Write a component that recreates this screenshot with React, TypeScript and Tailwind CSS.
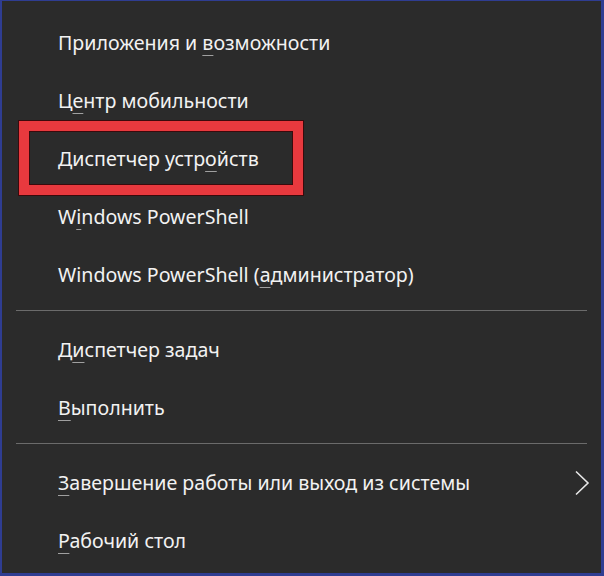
import React from 'react';

type Item = { before: string; key: string; after: string; submenu?: boolean; marked?: boolean };

const groups: Item[][] = [
  [
    { before: 'Приложения и ', key: 'в', after: 'озможности' },
    { before: 'Ц', key: 'е', after: 'нтр мобильности' },
    { before: 'Диспетчер устр', key: 'о', after: 'йств', marked: true },
    { before: 'W', key: 'i', after: 'ndows PowerShell' },
    { before: 'Windows PowerShell (', key: 'а', after: 'дминистратор)' },
  ],
  [
    { before: 'Д', key: 'и', after: 'спетчер задач' },
    { before: '', key: 'В', after: 'ыполнить' },
  ],
  [
    { before: '', key: 'З', after: 'авершение работы или выход из системы', submenu: true },
    { before: '', key: 'Р', after: 'абочий стол' },
  ],
];

function Row({ item }: { item: Item }) {
  return (
    <div className="relative flex h-[58px] items-center pl-[56px] pr-[11px]">
      {/* red annotation frame */}
      {item.marked && (
        <div className="pointer-events-none absolute left-[17px] top-[-9px] h-[74px] w-[284px] border-[10px] border-[#e8393e] shadow-[0_0_0_1px_#3a0a0c,inset_0_0_0_1px_#3a0a0c]" />
      )}
      <span className="text-[19.6px] leading-none text-[#f2f2f2]">
        {item.before}
        <u className="decoration-[#a0a0a0] decoration-1 underline-offset-[5px]">{item.key}</u>
        {item.after}
      </span>
      {item.submenu && (
        <svg className="ml-auto" width="16" height="26" viewBox="0 0 16 26" fill="none">
          <path d="M2 1.5 L14 13 L2 24.5" stroke="#e8e8e8" strokeWidth="1.6" />
        </svg>
      )}
    </div>
  );
}

export default function App() {
  return (
    <div
      className="h-[576px] w-[604px] overflow-hidden border-b-[3px] border-l-2 border-r-[3px] border-t-[1px] border-[#2f3d92] bg-[#2b2b2b] pt-[13px]"
      style={{ fontFamily: '"Noto Sans", "Open Sans", sans-serif' }}
    >
      {groups.map((g, gi) => (
        <div key={gi}>
          {gi > 0 && <div className="mx-[14px] mb-[10px] mt-[6px] h-px bg-[#6b6b6b]" />}
          {g.map((item, i) => (
            <Row key={i} item={item} />
          ))}
        </div>
      ))}
    </div>
  );
}
